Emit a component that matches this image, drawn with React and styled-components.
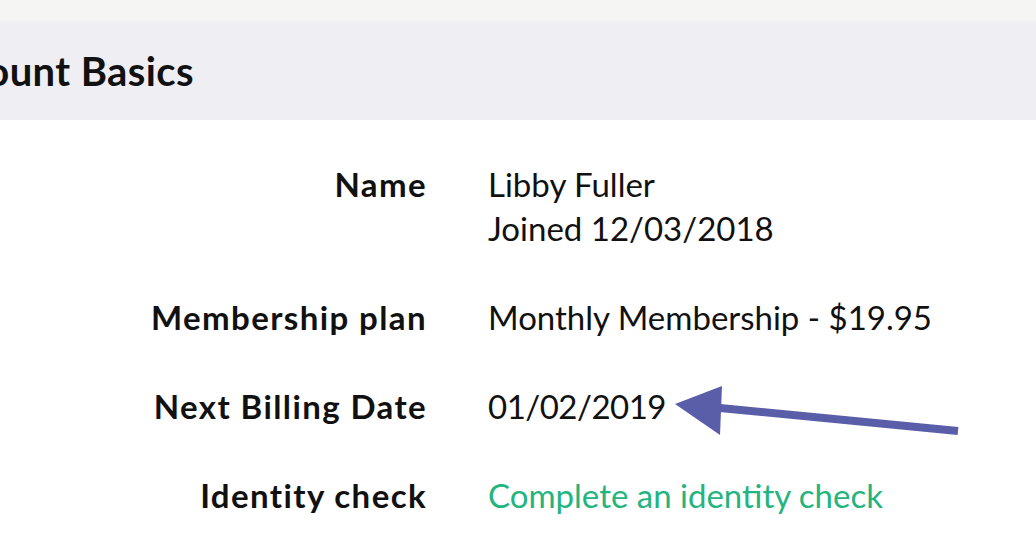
import React from "react";
import styled, { createGlobalStyle } from "styled-components";

const Global = createGlobalStyle`
  html, body { margin: 0; padding: 0; background: #ffffff; }
  body { font-family: Lato, "Open Sans", sans-serif; color: #111; overflow: hidden; }
`;

const Page = styled.div`
  width: 1036px;
  height: 544px;
  position: relative;
  overflow: hidden;
  background: #fff;
`;

const TopStrip = styled.div`
  height: 21px;
  background: #f5f5f4;
`;

const SectionHeader = styled.div`
  height: 99px;
  background: #efeff3;
  display: flex;
  align-items: center;
`;

const SectionTitle = styled.h2`
  margin: 0 0 0 -80px;
  font-size: 40px;
  font-weight: 700;
  letter-spacing: 0.4px;
  color: #111;
  white-space: nowrap;
`;

const Details = styled.div`
  display: grid;
  grid-template-columns: 427px 1fr;
  column-gap: 61px;
  padding-top: 42px;
  row-gap: 45px;
`;

const Label = styled.div`
  text-align: right;
  font-size: 33px;
  font-weight: 700;
  letter-spacing: 1.4px;
  line-height: 44px;
  color: #111;
`;

const Value = styled.div`
  font-size: 33px;
  line-height: 44px;
  letter-spacing: ${(p) => (p.$tight ? "-0.5px" : "0")};
  color: ${(p) => (p.$link ? "#24b47e" : "#111")};
`;

const Arrow = styled.svg`
  position: absolute;
  left: 660px;
  top: 370px;
`;

export default function App() {
  return (
    <Page>
      <Global />
      <TopStrip />
      <SectionHeader>
        <SectionTitle>Account Basics</SectionTitle>
      </SectionHeader>
      <Details>
        <Label>Name</Label>
        <Value>
          Libby Fuller
          <br />
          Joined 12/03/2018
        </Value>
        <Label>Membership plan</Label>
        <Value>Monthly Membership - $19.95</Value>
        <Label>Next Billing Date</Label>
        <Value $tight>01/02/2019</Value>
        <Label>Identity check</Label>
        <Value $link>Complete an identity check</Value>
      </Details>
      <Arrow width="320" height="80" viewBox="0 0 320 80">
        <line x1="298" y1="61" x2="60" y2="38" stroke="#5a5ea8" strokeWidth="8" />
        <polygon points="15,34 62,16 60,65" fill="#5a5ea8" />
      </Arrow>
    </Page>
  );
}
